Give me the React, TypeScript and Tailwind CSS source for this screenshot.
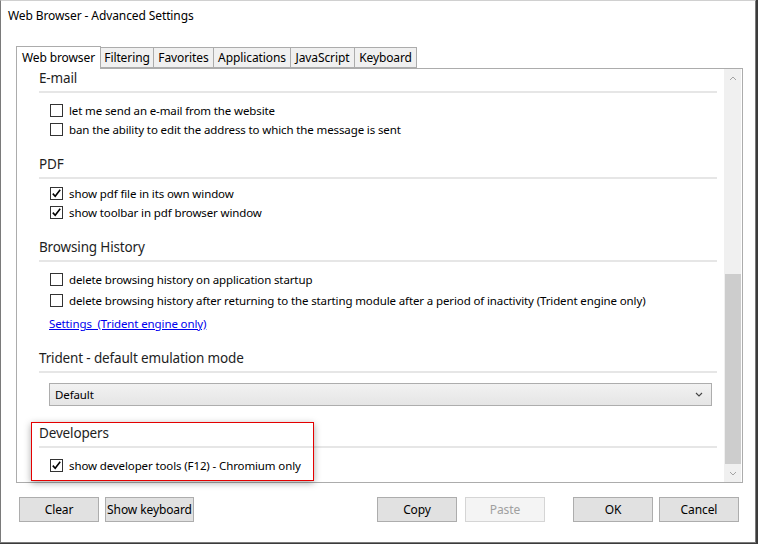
import React from 'react';

const TABS = ['Web browser', 'Filtering', 'Favorites', 'Applications', 'JavaScript', 'Keyboard'];
const TAB_W = [85, 53, 60, 77, 64, 62];

function Check({ checked }: { checked?: boolean }) {
  return (
    <div className="w-[13px] h-[13px] border border-[#333] bg-white flex items-center justify-center shrink-0">
      {checked && (
        <svg width="11" height="11" viewBox="0 0 11 11">
          <path d="M1.8 5.6 L4.2 8.2 L9.2 1.8" fill="none" stroke="#000" strokeWidth="1.6" />
        </svg>
      )}
    </div>
  );
}

function Row({ label, checked, mt }: { label: string; checked?: boolean; mt: string }) {
  return (
    <div className={`flex items-center h-[19px] pl-[11px] gap-[6px] ${mt}`}>
      <Check checked={checked} />
      <span className="text-[11.5px] tracking-[-0.12px] text-black whitespace-nowrap">{label}</span>
    </div>
  );
}

function Header({ title, mt }: { title: string; mt: string }) {
  return (
    <>
      <div className={`h-[18px] leading-[18px] text-[13.5px] tracking-[-0.15px] text-[#1e1e1e] ${mt}`}>{title}</div>
      <div className="h-[2px] bg-[#e6e6e6] mt-[4px] w-[678px]" />
    </>
  );
}

function Btn({ label, disabled, w = 'w-[80px]' }: { label: string; disabled?: boolean; w?: string }) {
  return (
    <div
      className={`${w} h-[25px] flex items-center justify-center text-[12px] tracking-[-0.1px] border ${
        disabled ? 'bg-[#f4f4f4] border-[#d5d5d5] text-[#a0a0a0]' : 'bg-[#e1e1e1] border-[#adadad] text-black'
      }`}
    >
      {label}
    </div>
  );
}

export default function App() {
  return (
    <div className="w-[758px] h-[544px] bg-[#3b3b3b]" style={{ fontFamily: '"Noto Sans", "Open Sans", sans-serif' }}>
      <div className="w-[756px] h-[543px] bg-white border border-[#7a7a7a] border-t-[#d0d0d0] relative flex flex-col">
        <div className="h-[30px] pl-[7px] flex items-center text-[12px] tracking-[-0.1px] text-black">Web Browser - Advanced Settings</div>

        {/* tabs */}
        <div className="flex items-end h-[37px] pl-[15px]">
          {TABS.map((t, i) => (
            <div
              key={t}
              style={{ width: TAB_W[i] }}
              className={
                i === 0
                  ? 'h-[23px] bg-white border border-b-0 border-[#acacac] text-[12px] tracking-[-0.1px] flex items-center justify-center relative top-[1px] z-10'
                  : 'h-[21px] bg-[#f0f0f0] border border-l-0 border-[#acacac] text-[12px] tracking-[-0.1px] flex items-center justify-center'
              }
            >
              {t}
            </div>
          ))}
        </div>

        {/* panel */}
        <div className="ml-[15px] w-[727px] h-[415px] border border-[#acacac] flex">
          <div className="flex-1 pl-[22px] flex flex-col overflow-hidden">
            <Header title="E-mail" mt="mt-0" />
            <Row label="let me send an e-mail from the website" mt="mt-[8px]" />
            <Row label="ban the ability to edit the address to which the message is sent" mt="mt-0" />

            <Header title="PDF" mt="mt-[16px]" />
            <Row label="show pdf file in its own window" checked mt="mt-[5px]" />
            <Row label="show toolbar in pdf browser window" checked mt="mt-0" />

            <Header title="Browsing History" mt="mt-[16px]" />
            <Row label="delete browsing history on application startup" mt="mt-[8px]" />
            <Row
              label="delete browsing history after returning to the starting module after a period of inactivity (Trident engine only)"
              mt="mt-[2px]"
            />
            <div className="h-[19px] mt-[4px] pl-[10px] flex items-center">
              <span className="text-[11.5px] tracking-[-0.12px] text-[#0000ee] underline whitespace-pre">Settings  (Trident engine only)</span>
            </div>

            <Header title="Trident - default emulation mode" mt="mt-[16px]" />
            <div className="mt-[10px] ml-[10px] w-[663px] h-[23px] border border-[#adadad] bg-gradient-to-b from-[#f2f2f2] to-[#e5e5e5] flex items-center justify-between pl-[5px] pr-[8px]">
              <span className="text-[11.5px] tracking-[-0.12px] text-black">Default</span>
              <svg width="8" height="5" viewBox="0 0 8 5">
                <path d="M1 1 L4 4 L7 1" fill="none" stroke="#444" strokeWidth="1.1" />
              </svg>
            </div>

            <Header title="Developers" mt="mt-[18px]" />
            <Row label="show developer tools (F12) - Chromium only" checked mt="mt-[8px]" />
          </div>

          {/* scrollbar */}
          <div className="w-[17px] bg-[#f0f0f0] flex flex-col items-center mr-[1px]">
            <div className="h-[18px] flex items-center justify-center">
              <svg width="8" height="5" viewBox="0 0 8 5">
                <path d="M1 4 L4 1 L7 4" fill="none" stroke="#a3a3a3" strokeWidth="1" />
              </svg>
            </div>
            <div className="flex-1 w-full" />
            <div className="h-[190px] w-[16px] bg-[#cdcdcd]" />
            <div className="h-[18px] flex items-center justify-center">
              <svg width="8" height="5" viewBox="0 0 8 5">
                <path d="M1 1 L4 4 L7 1" fill="none" stroke="#a3a3a3" strokeWidth="1" />
              </svg>
            </div>
          </div>
        </div>

        {/* buttons */}
        <div className="flex items-center mt-[14px] pl-[18px]">
          <Btn label="Clear" />
          <div className="w-[6px]" />
          <Btn label="Show keyboard" w="w-[89px]" />
          <div className="w-[183px]" />
          <Btn label="Copy" />
          <div className="w-[8px]" />
          <Btn label="Paste" disabled />
          <div className="w-[28px]" />
          <Btn label="OK" />
          <div className="w-[6px]" />
          <Btn label="Cancel" />
        </div>

        {/* annotation highlight */}
        <div className="absolute left-[30px] top-[421px] w-[283px] h-[59px] border border-[#e40000] shadow-[0_2px_7px_rgba(0,0,0,0.35)] pointer-events-none" />
      </div>
    </div>
  );
}
